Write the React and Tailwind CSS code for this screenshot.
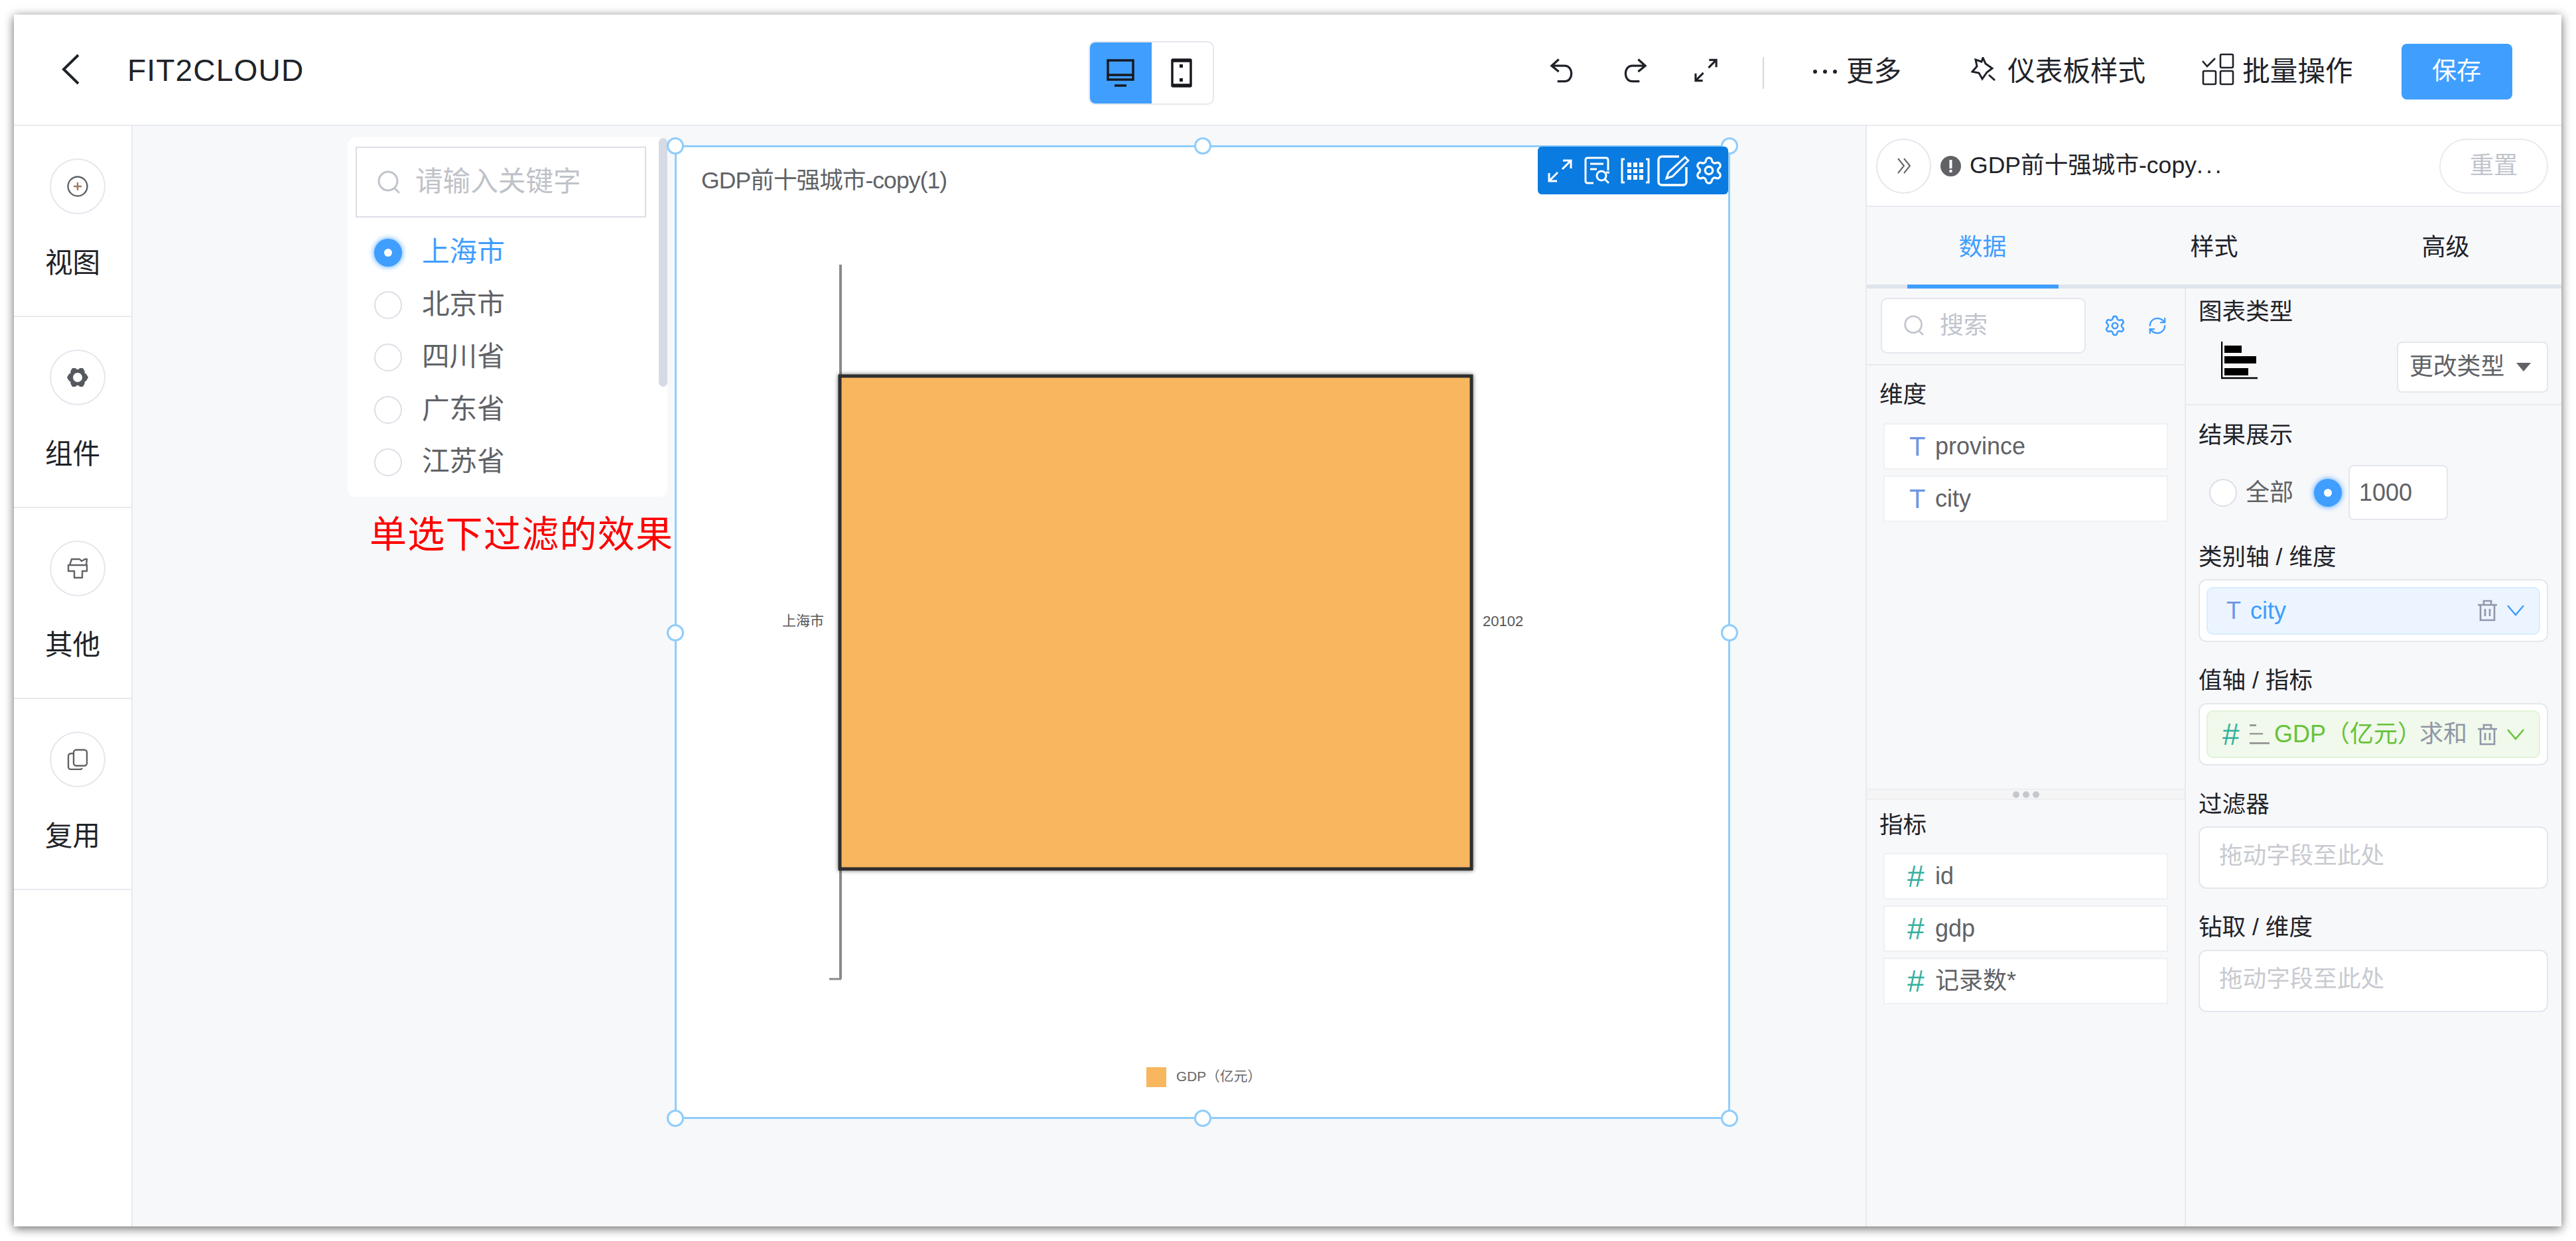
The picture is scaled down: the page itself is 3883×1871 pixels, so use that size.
import React from 'react';
import { Settings, RefreshCw } from 'lucide-react';

const SearchIco = ({ cls }) => (
  <svg className={cls} viewBox="0 0 36 36" fill="none" stroke="#c0c4cc" strokeWidth="3" strokeLinecap="round">
    <circle cx="17" cy="16" r="14" />
    <path d="M27 27l6 6" />
  </svg>
);

const Radio = ({ on }) =>
  on ? (
    <span className="flex h-[42px] w-[42px] shrink-0 items-center justify-center rounded-full bg-[#409eff] shadow-[0_0_8px_#409eff]">
      <span className="h-[12px] w-[12px] rounded-full bg-white" />
    </span>
  ) : (
    <span className="block h-[42px] w-[42px] shrink-0 rounded-full border-2 border-[#dcdfe6] bg-white" />
  );

const Trash = () => (
  <svg className="h-[33px] w-[31px] shrink-0" viewBox="0 0 31 33" fill="none" stroke="#8f96a8" strokeWidth="2.6">
    <path d="M1 8h29M10 8V2h11v6M5 8v23h21V8M12 14v11M19 14v11" />
  </svg>
);

const Chev = ({ color }) => (
  <svg className="ml-[14px] h-[17px] w-[26px] shrink-0" viewBox="0 0 26 17" fill="none" stroke={color} strokeWidth="2.5">
    <path d="M1 1l12 14L25 1" />
  </svg>
);

const Side = ({ label, children }) => (
  <div className="h-[288px] border-b-2 border-[#e8eaef] pl-[47px] pt-[49px]">
    <div className="ml-[7px] flex h-[84px] w-[84px] items-center justify-center rounded-full border-2 border-[#e4e7ed] bg-white">
      {children}
    </div>
    <div className="mt-[44px] text-[41.6px] leading-[60px] text-[#1f2329]">{label}</div>
  </div>
);

const Field = ({ name, kind }) => (
  <div className="mx-[25px] mb-[9px] flex h-[70px] items-center border-2 border-[#eef0f3] bg-white text-[36px] text-[#606266]">
    {kind === 'T' ? (
      <span className="ml-[37px] w-[39px] text-[40px] text-[#6f95e6]">T</span>
    ) : (
      <span className="ml-[34px] w-[42px] text-[46px] leading-none text-[#35b09f]">#</span>
    )}
    <span>{name}</span>
  </div>
);

const Heading = ({ children, cls }) => (
  <div className={'text-[35.6px] leading-[60px] text-[#1f2329] ' + cls}>{children}</div>
);

const DropBox = ({ cls }) => (
  <div className={'box-border h-[94px] rounded-[12px] border-2 border-[#e4e7ed] bg-white pl-[29px] text-[35.6px] leading-[84px] text-[#c8cad0] ' + cls}>
    拖动字段至此处
  </div>
);

const Handle = ({ cls }) => (
  <div className={'absolute h-[26px] w-[26px] rounded-full border-[3px] border-[#90cdfb] bg-white ' + cls} />
);

const Tab = ({ label, active }) => (
  <div className={'relative flex h-full flex-1 items-center justify-center pt-[5px] text-[36px] ' + (active ? 'text-[#409eff]' : 'text-[#1f2329]')}>
    {label}
    {active && <div className="absolute bottom-[-6px] left-1/2 h-[6px] w-[228px] -translate-x-1/2 bg-[#409eff]" />}
  </div>
);

export default function App() {
  return (
    <div className="h-[1871px] w-[3883px] overflow-hidden bg-white pl-[21px] pt-[22px] font-['Liberation_Sans','Noto_Sans_CJK_SC',sans-serif]">
      <div className="flex h-[1827px] w-[3840px] flex-col bg-white shadow-[0_3px_14px_rgba(0,0,0,0.6)]">
        {/* header */}
        <header className="flex h-[168px] shrink-0 items-center border-b-2 border-[#e8eaef] pt-[6px] text-[41.6px] text-[#1f2329]">
          <div className="flex w-[1620px] items-center pb-[4px]">
            <svg className="mb-[4px] ml-[72px] h-[47px] w-[27px]" viewBox="0 0 27 47" fill="none" stroke="#1f2329" strokeWidth="4">
              <path d="M25 2L3 23.5 25 45" />
            </svg>
            <span className="ml-[72px] text-[46px] leading-none tracking-[1.2px]">FIT2CLOUD</span>
          </div>
          <div className="mt-[4px] flex h-[96px] w-[189px] overflow-hidden rounded-[10px] border-2 border-[#e4e7ed]">
            <div className="-m-[2px] mr-0 flex w-[95px] items-center justify-center bg-[#409eff]">
              <svg className="h-[42px] w-[42px]" viewBox="0 0 42 42" fill="none" stroke="#17191f" strokeWidth="3.5">
                <rect x="2" y="2" width="38" height="29" />
                <path d="M2 24h38M12 40h18" />
              </svg>
            </div>
            <div className="flex flex-1 items-center justify-center pr-[2px]">
              <svg className="h-[44px] w-[32px]" viewBox="0 0 32 44" fill="none" stroke="#17191f" strokeWidth="3.5">
                <rect x="2" y="2" width="28" height="40" rx="1" />
                <path d="M2 4h28M2 40h28" />
                <rect x="13" y="9" width="5" height="5" fill="#17191f" stroke="none" />
                <rect x="13" y="30" width="5" height="5" fill="#17191f" stroke="none" />
              </svg>
            </div>
          </div>
          <svg className="mb-[5px] ml-[506px] h-[38px] w-[39px]" viewBox="0 0 40 38" fill="none" stroke="#1f2329" strokeWidth="3.4">
            <path d="M14 2L3 12l11 9M3 12h20c14 0 14 24 0 24H12" />
          </svg>
          <svg className="mb-[5px] ml-[69px] h-[38px] w-[39px]" viewBox="0 0 40 38" fill="none" stroke="#1f2329" strokeWidth="3.4">
            <path d="M26 2l11 10-11 9M37 12H17C3 12 3 36 17 36h11" />
          </svg>
          <svg className="mb-[5px] ml-[70px] h-[38px] w-[37px]" viewBox="0 0 38 38" fill="none" stroke="#1f2329" strokeWidth="3.2">
            <path d="M24 3h11v11M35 3L23 15M14 35H3V24M3 35l12-12" />
          </svg>
          <div className="ml-[67px] mt-[4px] h-[48px] w-[2px] bg-[#d4d7de]" />
          <div className="ml-[74px] flex w-[36px] items-center justify-between">
            <span className="h-[6px] w-[6px] rounded-full bg-[#1f2329]" />
            <span className="h-[6px] w-[6px] rounded-full bg-[#1f2329]" />
            <span className="h-[6px] w-[6px] rounded-full bg-[#1f2329]" />
          </div>
          <span className="ml-[14px]">更多</span>
          <svg className="mb-[8px] ml-[105px] h-[36px] w-[38px]" viewBox="0 0 38 36" fill="none" stroke="#1f2329" strokeWidth="3">
            <path d="M18 1l4 9 10 7-8 6-7 10-5-9-10-2 7-8-2-10 9 3zM27 27l9 8" />
          </svg>
          <span className="ml-[17px]">仪表板样式</span>
          <svg className="mb-[7px] ml-[85px] h-[49px] w-[49px]" viewBox="0 0 49 49" fill="none" stroke="#1f2329" strokeWidth="2.6">
            <path d="M1 12l7 8L20 8" />
            <rect x="28" y="2" width="19" height="20" rx="2" />
            <rect x="2" y="27" width="19" height="20" rx="2" />
            <rect x="28" y="27" width="19" height="20" rx="2" />
          </svg>
          <span className="ml-[12px]">批量操作</span>
          <button className="ml-[73px] h-[84px] w-[167px] rounded-[8px] bg-[#409eff] text-[37px] text-white">保存</button>
        </header>

        <div className="flex min-h-0 flex-1">
          {/* left sidebar */}
          <aside className="w-[179px] shrink-0 border-r-2 border-[#e8eaef] bg-white">
            <Side label="视图">
              <svg className="h-[32px] w-[32px]" viewBox="0 0 32 32" fill="none" stroke="#606266" strokeWidth="2.4">
                <circle cx="16" cy="16" r="14.5" />
                <path d="M16 10v12M10 16h12" stroke="#a07a5a" />
              </svg>
            </Side>
            <Side label="组件">
              <svg className="h-[32px] w-[32px]" viewBox="0 0 32 32">
                <path d="M0 16L8 2h16l8 14-8 14H8z" fill="#55585e" />
                <circle cx="16" cy="16" r="7" fill="#fff" />
                <circle cx="16" cy="1" r="3" fill="#fff" />
                <circle cx="16" cy="31" r="3" fill="#fff" />
                <circle cx="29" cy="8" r="2.5" fill="#fff" />
                <circle cx="3" cy="8" r="2.5" fill="#fff" />
                <circle cx="29" cy="24" r="2.5" fill="#fff" />
                <circle cx="3" cy="24" r="2.5" fill="#fff" />
              </svg>
            </Side>
            <Side label="其他">
              <svg className="h-[32px] w-[32px]" viewBox="0 0 32 32" fill="none" stroke="#606266" strokeWidth="2.4" strokeLinejoin="round">
                <path d="M4 11L7 2h12l3 3 5-3h3l-1 9" />
                <path d="M2 11h28v9h-7v10H11V20H2z" />
              </svg>
            </Side>
            <Side label="复用">
              <svg className="h-[32px] w-[32px]" viewBox="0 0 32 32" fill="none" stroke="#606266" strokeWidth="2.4">
                <rect x="10" y="1.5" width="20" height="24" rx="4" />
                <path d="M10 7H6a4 4 0 0 0-4 4v16a4 4 0 0 0 4 4h14a4 4 0 0 0 3-2" />
              </svg>
            </Side>
          </aside>

          {/* canvas */}
          <main className="relative min-w-0 flex-1 bg-[#f7f8fa]">
            <div className="absolute left-[324px] top-[17px] h-[542px] w-[482px] rounded-[12px] bg-white pl-[12px] pt-[14px]">
              <div className="flex h-[107px] w-[438px] items-center border-2 border-[#dcdfe6] pl-[30px] text-[41.6px] text-[#bfc2c9]">
                <SearchIco cls="h-[36px] w-[36px]" />
                <span className="ml-[22px]">请输入关键字</span>
              </div>
              <div className="mt-[13px] flex flex-col">
                {['上海市', '北京市', '四川省', '广东省', '江苏省'].map((t, i) => (
                  <div key={t} className={'flex h-[79px] items-center pl-[28px] text-[41.6px] ' + (i === 0 ? 'text-[#409eff]' : 'text-[#606266]')}>
                    <Radio on={i === 0} />
                    <span className="ml-[30px]">{t}</span>
                  </div>
                ))}
              </div>
              <div className="absolute right-0 top-[1px] h-[375px] w-[13px] rounded-full bg-[#d6dae5]" />
            </div>
            <div className="absolute left-[357px] top-[580px] whitespace-nowrap text-[56px] leading-[72px] tracking-[1.3px] text-[#ff0000]">单选下过滤的效果</div>

            <div className="absolute left-[817px] top-[29px] box-border h-[1468px] w-[1591px] border-[3px] border-[#90cdfb] bg-white">
              <svg className="absolute -left-[3px] -top-[3px] h-[1468px] w-[1591px]" viewBox="1017 219 1591 1468">
                <line x1="1267" y1="399" x2="1267" y2="1476" stroke="#8a8a8a" strokeWidth="4" />
                <line x1="1250" y1="1476" x2="1268" y2="1476" stroke="#8a8a8a" strokeWidth="3" />
                <rect className="drop-shadow-[0_0_3px_rgba(0,0,0,0.6)]" x="1266" y="567" width="952" height="743" fill="#f8b65f" stroke="#2e2e2e" strokeWidth="5" />
                <text x="1179" y="943" fontSize="21" fill="#555">上海市</text>
                <text x="2235" y="944" fontSize="22" fill="#555">20102</text>
                <rect x="1728" y="1609" width="30" height="30" fill="#f8b65f" />
                <text x="1773" y="1630" fontSize="20.8" fill="#666">GDP（亿元）</text>
              </svg>
              <div className="absolute left-[37px] top-[25px] text-[35.6px] leading-[50px] tracking-[-0.95px] text-[#606266]">GDP前十强城市-copy(1)</div>
              <Handle cls="-left-[15px] -top-[15px]" />
              <Handle cls="left-[780px] -top-[15px]" />
              <Handle cls="-right-[15px] -top-[15px]" />
              <Handle cls="-left-[15px] top-[719px]" />
              <Handle cls="-right-[15px] top-[719px]" />
              <Handle cls="-left-[15px] -bottom-[15px]" />
              <Handle cls="left-[780px] -bottom-[15px]" />
              <Handle cls="-right-[15px] -bottom-[15px]" />
              <div className="absolute -top-[1px] right-[0px] flex h-[72px] w-[287px] items-center rounded-[6px] bg-[#0a7be0] pl-[15px]">
                <svg className="h-[35px] w-[37px]" viewBox="0 0 37 35" fill="none" stroke="#fff" strokeWidth="3">
                  <path d="M23 2h12v12M35 2L22 15M14 33H2V21M2 33l13-13" />
                </svg>
                <svg className="ml-[18px] h-[42px] w-[39px]" viewBox="0 0 39 42" fill="none" stroke="#fff" strokeWidth="3">
                  <path d="M14 40H5a3 3 0 0 1-3-3V5a3 3 0 0 1 3-3h28a3 3 0 0 1 3 3v16M9 11h20M9 19h10" />
                  <circle cx="26" cy="29" r="7" />
                  <path d="M31 34l6 6M33 24h5" />
                </svg>
                <svg className="ml-[16px] h-[39px] w-[44px]" viewBox="0 0 44 39" fill="none" stroke="#fff" strokeWidth="3">
                  <path d="M6 2H2v35h4M38 2h4v35h-4" />
                  <path d="M10 7h6v7h-6zM19 7h6v7h-6zM28 7h6v7h-6zM10 17h6v6h-6zM19 17h6v6h-6zM28 17h6v6h-6zM10 26h6v7h-6zM19 26h6v7h-6zM28 26h6v7h-6z" fill="#fff" stroke="none" />
                </svg>
                <svg className="ml-[11px] h-[47px] w-[49px]" viewBox="0 0 49 47" fill="none" stroke="#fff" strokeWidth="3.4">
                  <path d="M33 2H7a5 5 0 0 0-5 5v33a5 5 0 0 0 5 5h33a5 5 0 0 0 4-4V18" />
                  <path d="M42 3l5 5-24 24-9 3 3-9z" strokeWidth="3" />
                </svg>
                <Settings className="ml-[6px] h-[46px] w-[46px] text-white" strokeWidth={1.7} />
              </div>
            </div>
          </main>

          {/* right panel */}
          <aside className="flex w-[1049px] shrink-0 flex-col border-l-2 border-[#e8eaef] bg-[#f7f8fa]">
            <div className="flex h-[122px] shrink-0 items-center border-b-2 border-[#e8eaef] bg-white pl-[14px] pr-[20px]">
              <div className="flex h-[83px] w-[83px] items-center justify-center rounded-full border-2 border-[#e4e7ed]">
                <svg className="h-[24px] w-[22px]" viewBox="0 0 22 24" fill="none" stroke="#606266" strokeWidth="2">
                  <path d="M2 1l9 11-9 11M11 1l9 11-9 11" />
                </svg>
              </div>
              <svg className="ml-[14px] h-[31px] w-[31px]" viewBox="0 0 31 31">
                <circle cx="15.5" cy="15.5" r="15.5" fill="#606266" />
                <rect x="13.5" y="6" width="4" height="13" fill="#fff" />
                <rect x="13.5" y="21" width="4" height="4" fill="#fff" />
              </svg>
              <span className="ml-[13px] text-[35.6px] text-[#1f2329]">GDP前十强城市-copy<span className="tracking-[4px]">...</span></span>
              <div className="ml-auto flex h-[83px] w-[164px] items-center justify-center rounded-full border-2 border-[#e8eaef] text-[36px] text-[#c0c4cc]">重置</div>
            </div>
            <div className="flex h-[123px] shrink-0 border-b-[6px] border-[#dfe4ed]">
              <Tab label="数据" active />
              <Tab label="样式" />
              <Tab label="高级" />
            </div>
            <div className="flex min-h-0 flex-1">
              <div className="w-[481px] shrink-0 border-r-2 border-[#e8eaef]">
                <div className="flex h-[116px] items-start border-b-2 border-[#e8eaef] pl-[21px] pt-[14px]">
                  <div className="flex h-[84px] w-[309px] items-center rounded-[10px] border-2 border-[#e4e7ed] bg-white pl-[32px] text-[36px] text-[#c0c4cc]">
                    <SearchIco cls="h-[32px] w-[32px]" />
                    <span className="ml-[23px]">搜索</span>
                  </div>
                  <div className="flex h-[84px] items-center">
                    <Settings className="ml-[27px] h-[34px] w-[34px] text-[#409eff]" strokeWidth={1.8} />
                    <RefreshCw className="ml-[32px] h-[30px] w-[30px] text-[#409eff]" strokeWidth={1.8} />
                  </div>
                </div>
                <div className="h-[638px]">
                  <Heading cls="ml-[19px] pb-[13px] pt-[14px]">维度</Heading>
                  <Field name="province" kind="T" />
                  <Field name="city" kind="T" />
                </div>
                <div className="flex h-[17px] items-center justify-center gap-[5px] border-y-2 border-[#eceef2] bg-[#f5f5f6]">
                  <span className="h-[10px] w-[10px] rounded-full bg-[#c4c7ce]" />
                  <span className="h-[10px] w-[10px] rounded-full bg-[#c4c7ce]" />
                  <span className="h-[10px] w-[10px] rounded-full bg-[#c4c7ce]" />
                </div>
                <Heading cls="ml-[19px] pb-[12px] pt-[8px]">指标</Heading>
                <Field name="id" kind="#" />
                <Field name="gdp" kind="#" />
                <Field name="记录数*" kind="#" />
              </div>

              <div className="min-w-0 flex-1">
                <div className="h-[176px] border-b-2 border-[#e8eaef] pl-[19px] pr-[20px] pt-[5px]">
                  <Heading>图表类型</Heading>
                  <div className="mt-[15px] flex items-start">
                    <svg className="ml-[34px] h-[57px] w-[55px]" viewBox="0 0 55 57">
                      <path d="M1 0v55h54" fill="none" stroke="#000" strokeWidth="2.5" />
                      <rect x="5" y="6" width="26" height="11" />
                      <rect x="5" y="22" width="48" height="11" />
                      <rect x="5" y="40" width="36" height="11" />
                    </svg>
                    <div className="ml-auto flex h-[77px] w-[228px] items-center rounded-[8px] border-2 border-[#e4e7ed] bg-white pl-[17px] text-[35.8px] text-[#606266]">
                      更改类型
                      <span className="ml-[18px] h-0 w-0 border-x-[11px] border-t-[13px] border-x-transparent border-t-[#606266]" />
                    </div>
                  </div>
                </div>
                <div className="pl-[19px] pr-[20px] pt-[15px]">
                  <Heading>结果展示</Heading>
                  <div className="mt-[15px] flex h-[83px] items-center text-[36px] text-[#606266]">
                    <span className="ml-[16px]"><Radio /></span>
                    <span className="ml-[13px]">全部</span>
                    <span className="ml-[31px]"><Radio on /></span>
                    <div className="ml-[10px] flex h-[83px] w-[150px] items-center rounded-[8px] border-2 border-[#e4e7ed] bg-white pl-[14px]">1000</div>
                  </div>
                  <Heading cls="mt-[26px]">类别轴 / 维度</Heading>
                  <div className="mt-[3px] flex h-[95px] items-center rounded-[12px] border-2 border-[#e4e7ed] bg-white px-[10px]">
                    <div className="flex h-[72px] flex-1 items-center rounded-[10px] border-2 border-[#d9ecff] bg-[#ecf5ff] pl-[28px] pr-[22px] text-[36px] text-[#409eff]">
                      <span className="w-[36px] text-[#6f95e6]">T</span>
                      <span>city</span>
                      <span className="ml-auto"><Trash /></span>
                      <Chev color="#409eff" />
                    </div>
                  </div>
                  <Heading cls="mt-[28px]">值轴 / 指标</Heading>
                  <div className="mt-[4px] flex h-[94px] items-center rounded-[12px] border-2 border-[#e4e7ed] bg-white px-[10px]">
                    <div className="flex h-[72px] flex-1 items-center rounded-[10px] border-2 border-[#e1f3d8] bg-[#f0f9eb] pl-[22px] pr-[22px] text-[36px] text-[#67c23a]">
                      <span className="w-[40px] text-[46px] leading-none text-[#35b09f]">#</span>
                      <svg className="h-[31px] w-[32px] shrink-0" viewBox="0 0 32 31">
                        <rect x="1" y="0" width="10" height="3" fill="#9a9a9a" />
                        <rect x="1" y="13" width="20" height="2.5" fill="#9a9a9a" />
                        <rect x="1" y="27" width="30" height="3" fill="#9a9a9a" />
                      </svg>
                      <span className="ml-[6px] whitespace-nowrap">GDP（亿元）</span>
                      <span className="-ml-[3px] whitespace-nowrap text-[#8f96a8]">求和</span>
                      <span className="ml-auto"><Trash /></span>
                      <Chev color="#67c23a" />
                    </div>
                  </div>
                  <Heading cls="mt-[29px]">过滤器</Heading>
                  <DropBox cls="mt-[3px]" />
                  <Heading cls="mt-[28px]">钻取 / 维度</Heading>
                  <DropBox cls="mt-[4px]" />
                </div>
              </div>
            </div>
          </aside>
        </div>
      </div>
    </div>
  );
}
